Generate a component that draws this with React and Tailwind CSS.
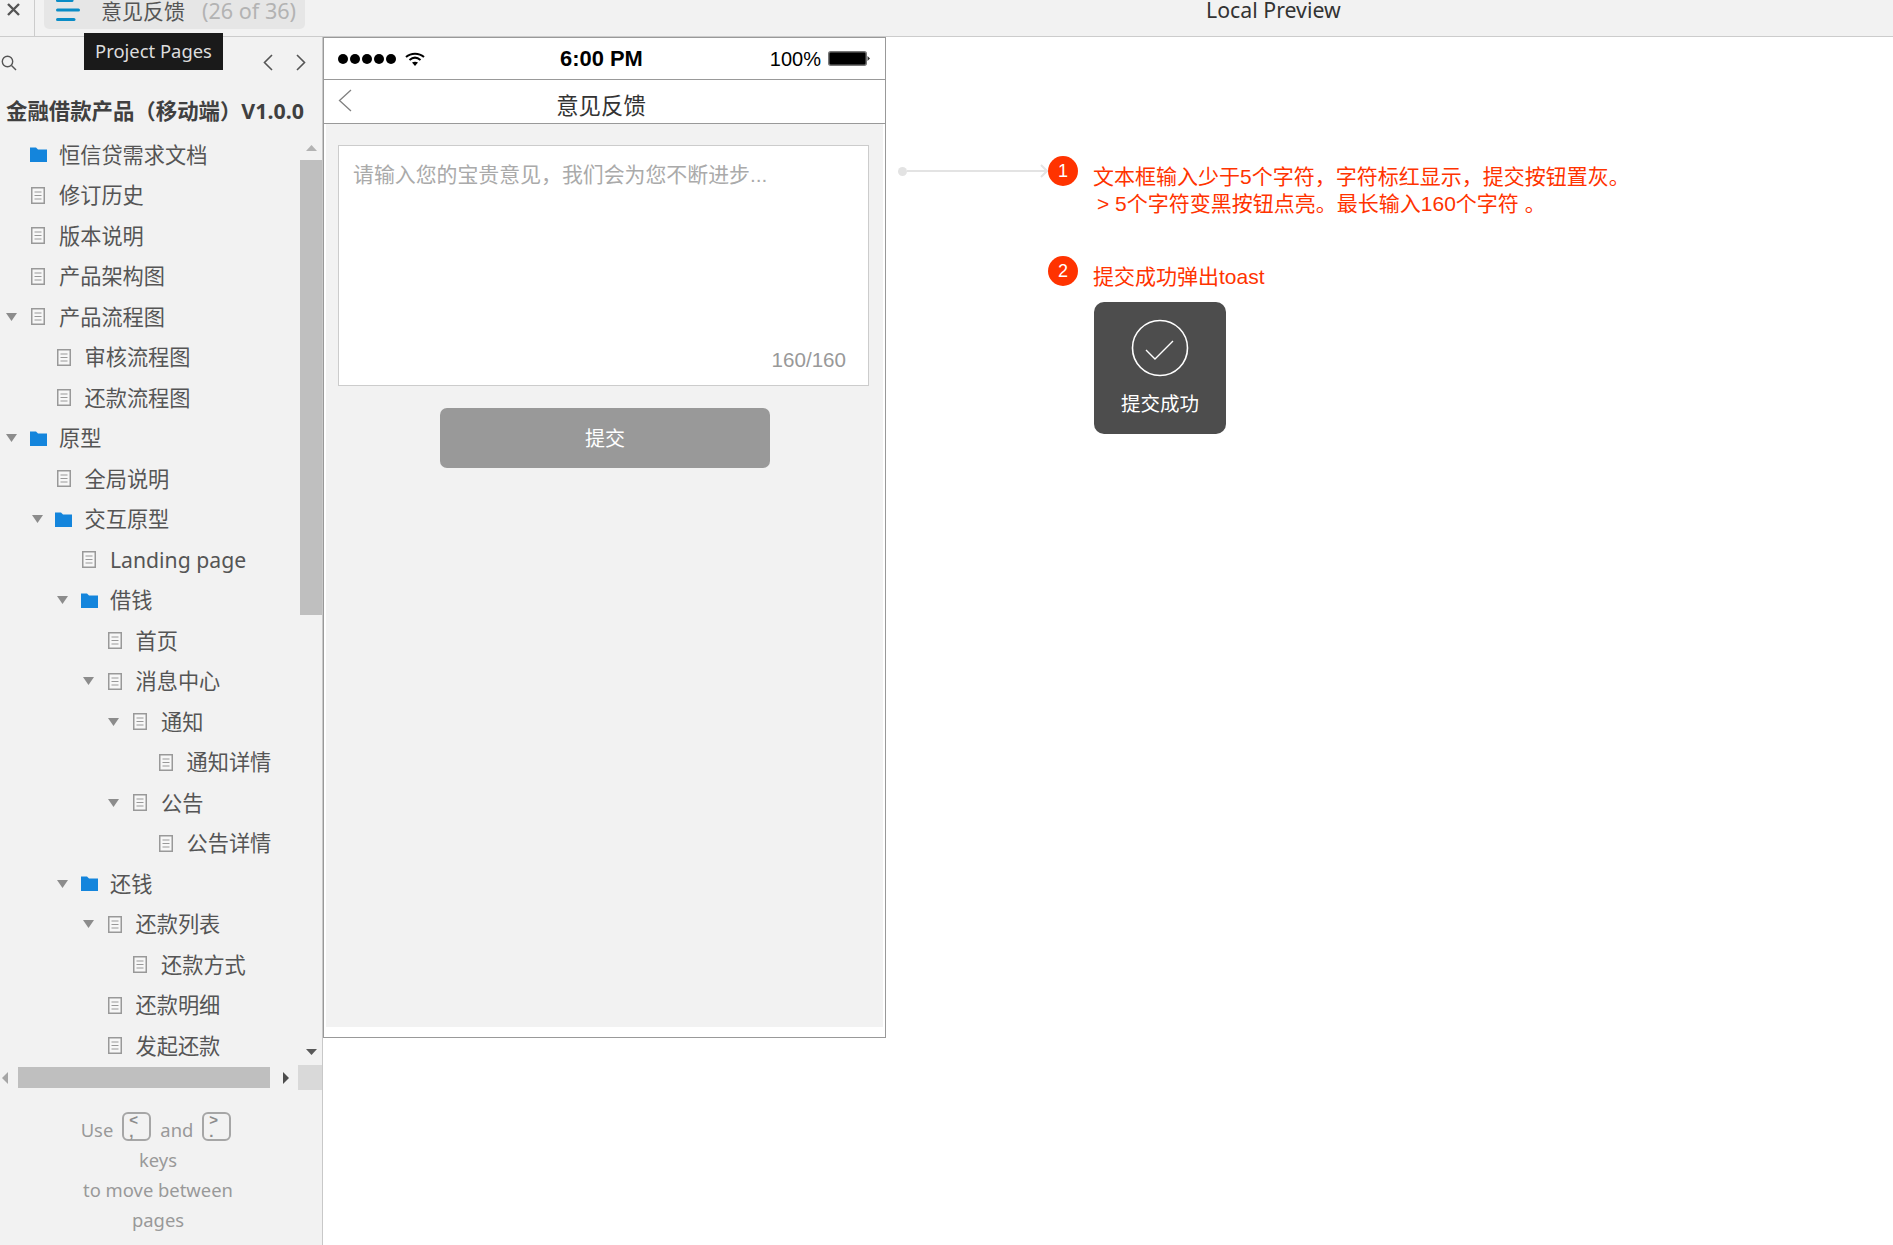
import React from "react";

const rows = [
  [0, "folder", false, "恒信贷需求文档"],
  [0, "doc", false, "修订历史"],
  [0, "doc", false, "版本说明"],
  [0, "doc", false, "产品架构图"],
  [0, "doc", true, "产品流程图"],
  [1, "doc", false, "审核流程图"],
  [1, "doc", false, "还款流程图"],
  [0, "folder", true, "原型"],
  [1, "doc", false, "全局说明"],
  [1, "folder", true, "交互原型"],
  [2, "doc", false, "Landing page"],
  [2, "folder", true, "借钱"],
  [3, "doc", false, "首页"],
  [3, "doc", true, "消息中心"],
  [4, "doc", true, "通知"],
  [5, "doc", false, "通知详情"],
  [4, "doc", true, "公告"],
  [5, "doc", false, "公告详情"],
  [2, "folder", true, "还钱"],
  [3, "doc", true, "还款列表"],
  [4, "doc", false, "还款方式"],
  [3, "doc", false, "还款明细"],
  [3, "doc", false, "发起还款"],
];

const indent = ["pl-[5px]", "pl-[30.5px]", "pl-[56px]", "pl-[81.5px]", "pl-[107px]", "pl-[132.5px]"];

function Folder() {
  return (
    <svg width="17" height="15" viewBox="0 0 17 15">
      <path d="M0 0.5H6L8 2.5H17V15H0Z" fill="#1485dc" />
    </svg>
  );
}

function Doc() {
  return (
    <svg width="14" height="17" viewBox="0 0 14 17" fill="none">
      <rect x="0.75" y="0.75" width="12.5" height="15.5" fill="#f7f7f7" stroke="#999999" strokeWidth="1.5" />
      <path d="M3.5 5H10.5M3.5 8.5H10.5M3.5 12H10.5" stroke="#999999" strokeWidth="1.2" />
    </svg>
  );
}

function Tri({ d, fill, w = 11, h = 8 }) {
  return (
    <svg width={w} height={h} viewBox={`0 0 ${w} ${h}`}>
      <path d={d} fill={fill} />
    </svg>
  );
}

function Row({ level, type, open, label }) {
  return (
    <div className={`flex h-[40.5px] items-center shrink-0 whitespace-nowrap ${indent[level]}`}>
      <div className="flex w-[24px] shrink-0 items-center pl-[1px]">
        {open && <Tri d="M0 0H11L5.5 8Z" fill="#8c8c8c" />}
      </div>
      <div className="flex w-[18px] shrink-0 justify-center">
        {type === "folder" ? <Folder /> : <Doc />}
      </div>
      <span className="ml-[12px] text-[21.2px] text-[#555555]">{label}</span>
    </div>
  );
}

function Key({ top, bottom }) {
  return (
    <span className="-mt-[8px] flex h-[29px] w-[29px] shrink-0 flex-col rounded-[6px] border-2 border-[#a6a6a6] pl-[5px] text-left font-['Liberation_Sans',sans-serif] text-[15px] font-bold leading-[12px] text-[#8c8c8c]">
      <span>{top}</span>
      <span>{bottom}</span>
    </span>
  );
}

function Sidebar() {
  return (
    <aside className="relative flex h-[1208px] w-[323px] shrink-0 flex-col border-r border-[#c8c8c8] bg-[#f2f2f2]">
      <div className="absolute left-[84px] top-[-4px] z-10 flex h-[37px] w-[139px] items-center justify-center bg-[#1a1a1a] pb-[2px] text-[18.4px] text-[#dddddd]">
        Project Pages
      </div>
      <div className="flex h-[51px] shrink-0 items-center justify-between pl-[1px] pr-[16px]">
        <svg width="16" height="16" viewBox="0 0 16 16" fill="none" stroke="#555555" strokeWidth="1.4">
          <circle cx="6.5" cy="6.5" r="5.2" />
          <path d="M10.5 10.5L15 15" />
        </svg>
        <div className="flex items-center gap-[23px]">
          <svg width="10" height="17" viewBox="0 0 10 17" fill="none" stroke="#555555" strokeWidth="1.6">
            <path d="M9 1L1.5 8.5L9 16" />
          </svg>
          <svg width="10" height="17" viewBox="0 0 10 17" fill="none" stroke="#555555" strokeWidth="1.6">
            <path d="M1 1L8.5 8.5L1 16" />
          </svg>
        </div>
      </div>
      <div className="flex h-[46.5px] shrink-0 items-center whitespace-nowrap pl-[6px] text-[21.4px] font-bold text-[#404040]">
        金融借款产品（移动端）V1.0.0
      </div>
      <div className="flex h-[930.5px] shrink-0 overflow-hidden">
        <div className="flex min-w-0 flex-1 flex-col overflow-hidden">
          {rows.map((r, i) => (
            <Row key={i} level={r[0]} type={r[1]} open={r[2]} label={r[3]} />
          ))}
        </div>
        <div className="flex w-[22px] shrink-0 flex-col items-center pt-[10px]">
          <Tri d="M5.5 0L11 6H0Z" fill="#b3b3b3" w={11} h={6} />
          <div className="mt-[9px] h-[455px] w-[22px] bg-[#bfbfbf]" />
          <div className="mt-auto pb-[10px]">
            <Tri d="M0 0H11L5.5 6Z" fill="#595959" w={11} h={6} />
          </div>
        </div>
      </div>
      <div className="flex h-[25px] shrink-0 items-center">
        <div className="ml-[2px] w-[16px]">
          <Tri d="M6 0V12L0 6Z" fill="#a6a6a6" w={6} h={12} />
        </div>
        <div className="h-[21px] w-[252px] bg-[#bfbfbf]" />
        <div className="ml-[13px] w-[15px]">
          <Tri d="M0 0V12L6 6Z" fill="#4d4d4d" w={6} h={12} />
        </div>
        <div className="h-[25px] flex-1 bg-[#d9d9d9]" />
      </div>
      <div className="w-[316px] pt-[25px] text-center text-[18.4px] leading-[30px] text-[#999999]">
        <div className="flex h-[30px] items-center justify-center gap-[9px] pr-[4px]">
          <span>Use</span>
          <Key top="<" bottom="," />
          <span>and</span>
          <Key top=">" bottom="." />
        </div>
        <div>keys</div>
        <div>to move between</div>
        <div>pages</div>
      </div>
    </aside>
  );
}

function Phone() {
  const sans = "font-['Liberation_Sans','Noto_Sans_CJK_SC',sans-serif]";
  return (
    <div className={`flex h-[1001px] w-[563px] shrink-0 flex-col border border-[#999999] bg-white ${sans}`}>
      <div className="relative flex h-[42px] shrink-0 items-center justify-between border-b border-[#999999] pl-[14px] pr-[15px]">
        <div className="flex items-center gap-[9px]">
          <div className="flex gap-[2px]">
            {[0, 1, 2, 3, 4].map((i) => (
              <div key={i} className="h-[10px] w-[10px] rounded-full bg-black" />
            ))}
          </div>
          <svg width="20" height="14" viewBox="0 0 20 14" fill="none" stroke="#000000" strokeWidth="2">
            <path d="M1 5C6 0.5 14 0.5 19 5" />
            <path d="M4.5 8C8 5 12 5 15.5 8" />
            <path d="M10 14L7 10.5C8.5 9.5 11.5 9.5 13 10.5Z" fill="#000000" stroke="none" />
          </svg>
        </div>
        <div className="absolute left-[236px] top-[9px] text-[21.9px] leading-[24px] font-bold text-black">6:00 PM</div>
        <div className="flex items-center gap-[7px] text-[20px] text-black">
          <span>100%</span>
          <svg width="42" height="15" viewBox="0 0 42 15">
            <rect x="0.75" y="0.75" width="37.5" height="13.5" rx="2" fill="#000000" stroke="#777777" strokeWidth="1.5" />
            <path d="M39.5 5L42 7.5L39.5 10Z" fill="#333333" />
          </svg>
        </div>
      </div>
      <div className="relative flex h-[44px] shrink-0 items-center justify-center border-b border-[#999999] pr-[7px]">
        <svg className="absolute left-[14px] top-[9px]" width="14" height="23" viewBox="0 0 14 23" fill="none" stroke="#808080" strokeWidth="1.3">
          <path d="M13 1L1.5 11.5L13 22" />
        </svg>
        <span className="pt-[10px] text-[22.4px] text-[#333333]">意见反馈</span>
      </div>
      <div className="mx-[2px] flex h-[903px] flex-col items-start bg-[#f2f2f2] pt-[21px]">
        <div className="ml-[12px] flex h-[241px] w-[531px] flex-col justify-between border border-[#cccccc] bg-white pb-[9px] pl-[14px] pr-[22px] pt-[13px]">
          <div className="text-[20.9px] text-[#aaaaaa]">请输入您的宝贵意见，我们会为您不断进步...</div>
          <div className="text-right text-[20.6px] text-[#999999]">160/160</div>
        </div>
        <div className="ml-[114px] mt-[22px] flex h-[60px] w-[330px] items-center justify-center rounded-[7px] bg-[#999999] pt-[2px] text-[20px] text-white">
          提交
        </div>
      </div>
    </div>
  );
}

function Notes() {
  const badge = "flex h-[30px] w-[30px] shrink-0 items-center justify-center rounded-full bg-[#ff3300] text-[18px] text-white";
  return (
    <div className="ml-[12px] pt-[119px] font-['Liberation_Sans','Noto_Sans_CJK_SC',sans-serif] text-[21px] leading-[27px] text-[#ff3300]">
      <div className="flex">
        <div className="mt-[10px] flex h-[10px] w-[150px] shrink-0 items-center">
          <div className="h-[9px] w-[9px] rounded-full bg-[#e3e3e3]" />
          <div className="h-[2px] flex-1 bg-[#e3e3e3]" />
          <svg width="8" height="14" viewBox="0 0 8 14" fill="none" stroke="#e3e3e3" strokeWidth="2" className="-ml-[8px]">
            <path d="M1 1L7 7L1 13" />
          </svg>
        </div>
        <div className={badge}>1</div>
        <div className="ml-[15px] mt-[6.5px] whitespace-nowrap">
          <div>文本框输入少于5个字符，字符标红显示，提交按钮置灰。</div>
          <div className="pl-[4px]">&gt; 5个字符变黑按钮点亮。最长输入160个字符 。</div>
        </div>
      </div>
      <div className="mt-[39.5px] flex pl-[150px]">
        <div className={badge}>2</div>
        <div className="ml-[15px] mt-[7px] whitespace-nowrap">提交成功弹出toast</div>
      </div>
      <div className="ml-[196px] mt-[12px] flex h-[132px] w-[132px] flex-col items-center rounded-[10px] bg-[#4d4d4d] pt-[17px]">
        <svg width="58" height="58" viewBox="0 0 58 58" fill="none" stroke="#ffffff">
          <circle cx="29" cy="29" r="27.5" strokeWidth="1.6" />
          <path d="M15 31L24 40L42 22" strokeWidth="1.4" />
        </svg>
        <div className="mt-[14px] text-[19.5px] leading-[26px] text-white">提交成功</div>
      </div>
    </div>
  );
}

export default function App() {
  return (
    <div className="flex h-[1245px] w-[1893px] flex-col overflow-hidden bg-white font-['Noto_Sans','Noto_Sans_CJK_SC',sans-serif]">
      <header className="flex h-[37px] shrink-0 items-start border-b border-[#cccccc] bg-[#f2f2f2]">
        <div className="flex h-[36px] w-[35px] shrink-0 justify-start border-r border-[#cccccc] pl-[7px] pt-[3px]">
          <svg width="13" height="13" viewBox="0 0 13 13" fill="none" stroke="#555555" strokeWidth="2.4">
            <path d="M1 1L12 12M12 1L1 12" />
          </svg>
        </div>
        <div className="ml-[9px] flex h-[29px] w-[261px] shrink-0 items-start rounded-b-[5px] bg-[#e6e6e6] pl-[12px]">
          <svg width="24" height="22" viewBox="0 0 24 22" fill="#0a8cc6" stroke="#0a8cc6" strokeWidth="3" strokeLinecap="round">
            <path d="M1.5 0.5H16" />
            <path d="M1.5 10H22.5" />
            <path d="M1.5 19.5H18" />
          </svg>
          <span className="ml-[21px] text-[21px] leading-[22px] text-[#555555]">意见反馈</span>
          <span className="ml-[17px] text-[21.6px] leading-[22px] text-[#b3b3b3]">(26 of 36)</span>
        </div>
        <div className="flex-1 pl-[901px] text-[21.3px] leading-[20px] text-[#333333]">Local Preview</div>
      </header>
      <div className="flex flex-1">
        <Sidebar />
        <Phone />
        <Notes />
      </div>
    </div>
  );
}
